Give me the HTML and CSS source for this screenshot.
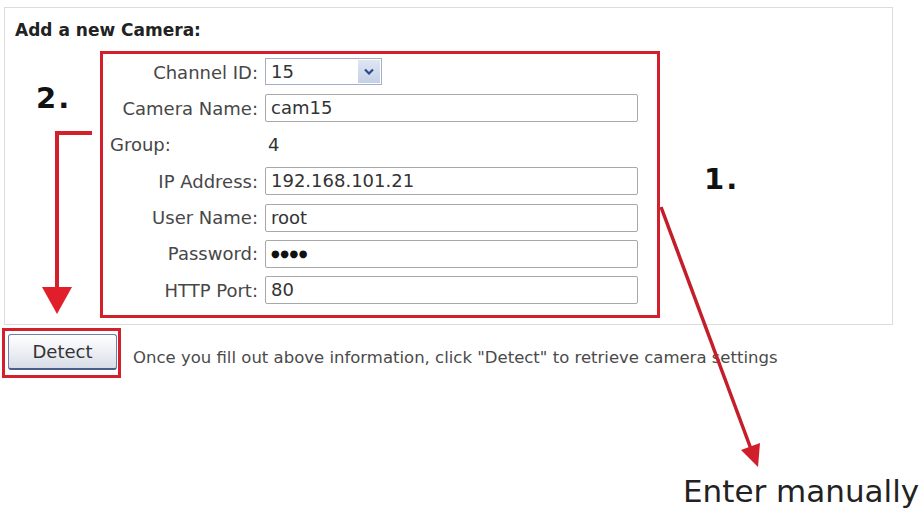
FILE: index.html
```html
<!DOCTYPE html>
<html>
<head>
<meta charset="utf-8">
<link rel="stylesheet" href="styles.css">
</head>
<body>
<div class="page">
  <div class="panel">
    <div class="heading">Add a new Camera:</div>
    <div class="formbox">
      <div class="grid">
        <label class="lbl">Channel ID:</label>
        <div class="select"><span class="sel-val">15</span><span class="sel-btn"><svg width="10" height="7" viewBox="0 0 10 7"><path d="M1 1.5 L5 5.5 L9 1.5" fill="none" stroke="#2b4a8c" stroke-width="2.2"/></svg></span></div>
        <label class="lbl">Camera Name:</label>
        <div class="input">cam15</div>
        <label class="lbl lbl-left">Group:</label>
        <div class="value">4</div>
        <label class="lbl">IP Address:</label>
        <div class="input">192.168.101.21</div>
        <label class="lbl">User Name:</label>
        <div class="input">root</div>
        <label class="lbl">Password:</label>
        <div class="input pw">●●●●</div>
        <label class="lbl">HTTP Port:</label>
        <div class="input">80</div>
      </div>
    </div>
  </div>
  <div class="detect-row">
    <div class="detect-box"><button class="detect">Detect</button></div>
    <span class="hint">Once you fill out above information, click "Detect" to retrieve camera settings</span>
  </div>

  <svg class="arrows" width="923" height="515" viewBox="0 0 923 515">
    <defs>
      <filter id="blur" x="-50%" y="-50%" width="200%" height="200%"><feGaussianBlur stdDeviation="1.5"/></filter>
    </defs>
    <path d="M63 140 V300" stroke="#9aa0ab" stroke-width="4" fill="none" filter="url(#blur)" opacity="0.8"/>
    <path d="M92 133 H57 V292" stroke="#d4202b" stroke-width="4" fill="none"/>
    <polygon points="42,287 72,287 57,314" fill="#e01f2a"/>
    <line x1="661" y1="207" x2="751" y2="449" stroke="#c41e2a" stroke-width="3.5"/>
    <polygon points="760,443 741,450 758,467" fill="#d01f2a"/>
  </svg>
  <div class="mark mark2">2.</div>
  <div class="mark mark1">1.</div>
  <div class="enter">Enter manually</div>
</div>
</body>
</html>
```

FILE: styles.css
```css
html, body {
  margin: 0;
  padding: 0;
  background: #fff;
}
.page {
  position: relative;
  width: 923px;
  height: 515px;
  overflow: hidden;
  font-family: "DejaVu Sans", Verdana, sans-serif;
  color: #444;
}
.panel {
  box-sizing: border-box;
  margin: 7px 0 0 4px;
  width: 889px;
  height: 318px;
  border: 1px solid #dcdcdc;
  padding: 12px 0 0 10px;
}
.heading {
  font-weight: bold;
  font-size: 17px;
  line-height: 20px;
  color: #222;
}
.formbox {
  box-sizing: border-box;
  margin: 11px 0 0 85px;
  width: 560px;
  height: 267px;
  border: 3px solid #d3202c;
  padding-top: 4px;
}
.grid {
  display: grid;
  grid-template-columns: 155px 373px;
  column-gap: 7px;
  grid-auto-rows: 28px;
  row-gap: 8.4px;
}
.lbl {
  font-size: 18px;
  color: #474747;
  text-align: right;
  align-self: center;
  white-space: nowrap;
}
.lbl-left {
  text-align: left;
  padding-left: 7px;
}
.value {
  font-size: 18px;
  color: #333;
  align-self: center;
  padding-left: 3px;
}
.input {
  box-sizing: border-box;
  height: 28px;
  border: 1px solid #a8a8a8;
  border-radius: 2px;
  padding-left: 5px;
  font-size: 18px;
  line-height: 26px;
  color: #333;
  background: #fff;
}
.input.pw {
  font-size: 10px;
  letter-spacing: 0.5px;
  color: #111;
}
.select {
  box-sizing: border-box;
  width: 117px;
  height: 27px;
  border: 1px solid #a3afc4;
  display: flex;
  align-items: stretch;
  background: #fff;
}
.sel-val {
  flex: 1;
  font-size: 18px;
  line-height: 25px;
  padding-left: 5px;
  color: #333;
}
.sel-btn {
  width: 22px;
  margin: 1px;
  background: linear-gradient(#dfe6f3, #c4d0e6);
  display: flex;
  align-items: center;
  justify-content: center;
}
.detect-row {
  display: flex;
  align-items: center;
  margin: 3px 0 0 2px;
}
.detect-box {
  border: 3px solid #d3202c;
  padding: 3px 1px 5px 3px;
}
.detect {
  display: block;
  box-sizing: border-box;
  width: 109px;
  height: 36px;
  border: 1px solid #6d7fa6;
  border-bottom: 2px solid #4c5d8a;
  border-radius: 3px;
  background: linear-gradient(#ffffff, #e9ecf2 60%, #d7dce6);
  font-family: "DejaVu Sans", Verdana, sans-serif;
  font-size: 18px;
  color: #333;
  padding: 0;
}
.hint {
  margin-left: 12px;
  font-size: 16.5px;
  color: #4a4a4a;
  padding-top: 8px;
}
.arrows {
  position: absolute;
  left: 0;
  top: 0;
}
.mark {
  position: absolute;
  font-weight: bold;
  font-size: 29px;
  line-height: 30px;
  letter-spacing: 2px;
  color: #111;
}
.mark2 {
  left: 36px;
  top: 83px;
}
.mark1 {
  left: 704px;
  top: 164px;
}
.enter {
  position: absolute;
  left: 683px;
  top: 471px;
  font-size: 31px;
  line-height: 40px;
  color: #222;
}
```
